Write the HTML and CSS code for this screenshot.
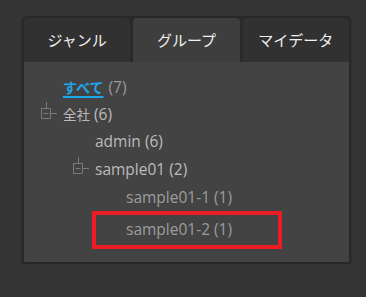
FILE: index.html
```html
<!DOCTYPE html>
<html lang="ja">
<head>
    <meta charset="UTF-8">
    <meta name="viewport" content="width=device-width, initial-scale=1.0">
    <title>グループ</title>
    <link rel="stylesheet" href="styles.css">
</head>
<body>
    <div class="panel">
        <div class="tabs">
            <div class="tab">ジャンル</div>
            <div class="tab active">グループ</div>
            <div class="tab">マイデータ</div>
        </div>
        <ul class="tree">
            <li class="row lv0"><span class="slot"></span><a class="label link" href="#">すべて</a><span class="count">(7)</span></li>
            <li class="row lv0">
                <svg class="slot" width="17" height="18" viewBox="0 0 17 18"><path d="M6.5 1V7.5M1.5 7.5H10.5V17.5H1.5ZM3.5 12.5H8.5M10.5 12.5H17" fill="none" stroke="#7a7a7a"/></svg>
                <span class="label"><span class="ja">全社</span> (6)</span>
            </li>
            <li class="row lv1"><span class="slot"></span><span class="label">admin (6)</span></li>
            <li class="row lv1 tall">
                <svg class="slot" width="17" height="18" viewBox="0 0 17 18"><path d="M6.5 1V7.5M1.5 7.5H10.5V17.5H1.5ZM3.5 12.5H8.5M10.5 12.5H17" fill="none" stroke="#7a7a7a"/></svg>
                <span class="label">sample01 (2)</span>
            </li>
            <li class="row lv2"><span class="slot"></span><span class="label dim">sample01-1 (1)</span></li>
            <li class="row marked"><span class="label dim">sample01-2 (1)</span></li>
        </ul>
    </div>
</body>
</html>
```

FILE: styles.css
```css
body { margin: 0; background-color: #343434; font-family: "Open Sans", "Noto Sans CJK JP", sans-serif; color: #bbb; }
.panel { margin: 16px 15px 0 22px; height: 244px; background-color: #2a2a2a; border: 2px solid #282828; border-radius: 5px; box-shadow: 0 2px 2px rgba(0, 0, 0, 0.35); display: flex; flex-direction: column; }
.tabs { display: flex; gap: 3px; height: 44px; }
.tab { flex: 1; display: flex; align-items: center; justify-content: center; background-color: #313131; color: #f0f0f0; font-family: "Noto Sans CJK JP", sans-serif; font-size: 15px; border-radius: 4px 4px 0 0; padding-bottom: 1px; }
.tab.active { background-color: #3e3e3e; }
.tree { flex: 1; margin: 0; padding: 11px 0 0 0; list-style: none; background-color: #434343; }
.row { display: flex; align-items: center; height: 27px; font-size: 15.5px; }
.row.tall { height: 29px; }
.lv0 { padding-left: 16px; }
.lv1 { padding-left: 48px; }
.lv2 { padding-left: 79px; }
.slot { width: 17px; height: 18px; margin-right: 6px; flex: none; }
svg.slot { margin-bottom: 8px; }
.label { white-space: nowrap; }
.ja { font-family: "Noto Sans CJK JP", sans-serif; font-size: 13.5px; }
.link { color: #1ea6ec; font-weight: bold; font-size: 14px; text-decoration: underline; text-decoration-thickness: 2px; text-underline-offset: 3px; font-family: "Noto Sans CJK JP", sans-serif; }
.count { color: #999; margin-left: 5px; }
.dim { color: #9c9c9c; }
.marked { margin: 1px 0 0 68px; width: 190px; height: 38px; box-sizing: border-box; border: 4px solid #ec1c24; padding-left: 30px; padding-bottom: 3px; }
```
